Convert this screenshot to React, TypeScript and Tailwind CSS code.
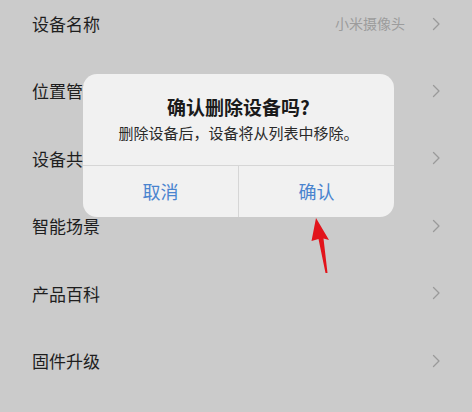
import React from 'react'

type Row = {
  label: string;
  value?: string;
}

const rows: Row[] = [
  { label: '设备名称', value: '小米摄像头' },
  { label: '位置管理' },
  { label: '设备共享' },
  { label: '智能场景' },
  { label: '产品百科' },
  { label: '固件升级' },
]

const Chevron = () => (
  <svg width="9" height="14" viewBox="0 0 9 14" className="shrink-0">
    <path d="M1.5 1.5 L7 7 L1.5 12.5" fill="none" stroke="#9a9a9a" strokeWidth="1.3" strokeLinecap="round" strokeLinejoin="round" />
  </svg>
)

const App = () => {
  return (
    <div
      className="relative w-[472px] h-[412px] overflow-hidden bg-[#cbcbcb]"
      style={{ fontFamily: '"Noto Sans CJK SC", "Noto Sans", sans-serif' }}
    >
      <div className="-mt-[10px] flex flex-col">
        {rows.map((row) => (
          <div key={row.label} className="h-[67.4px] flex items-center justify-between pl-[32px] pr-[31px]">
            <span className="text-[17px] text-[#1e1e1e]">{row.label}</span>
            <div className="flex items-center gap-[27px]">
              {row.value && <span className="text-[14px] text-[#9c9c9c]">{row.value}</span>}
              <Chevron />
            </div>
          </div>
        ))}
      </div>

      {/* dialog */}
      <div className="absolute left-[83px] top-[74px] w-[311px] h-[143px] rounded-[14px] bg-[#f1f1f1] flex flex-col overflow-hidden">
        <div className="h-[92px] flex flex-col items-center justify-center border-b border-[#d6d6d6]">
          <div className="text-[19px] font-bold text-[#1a1a1a] leading-[24px]">确认删除设备吗?</div>
          <div className="text-[15px] text-[#2a2a2a] leading-[22px] mt-[3px]">删除设备后，设备将从列表中移除。</div>
        </div>
        <div className="flex-1 flex">
          <button className="flex-1 flex items-center justify-center text-[18px] text-[#4a84cf] border-r border-[#d6d6d6]">取消</button>
          <button className="flex-1 flex items-center justify-center text-[18px] text-[#4a84cf]">确认</button>
        </div>
      </div>

      {/* red annotation arrow */}
      <svg className="absolute left-[305px] top-[214px]" width="35" height="64" viewBox="0 0 35 64">
        <path d="M11 4 L24 26 L18.5 24.5 L22.5 59 L20.5 59 L13.5 25 L6.5 27 Z" fill="#e2141b" />
      </svg>
    </div>
  )
}

export default App
